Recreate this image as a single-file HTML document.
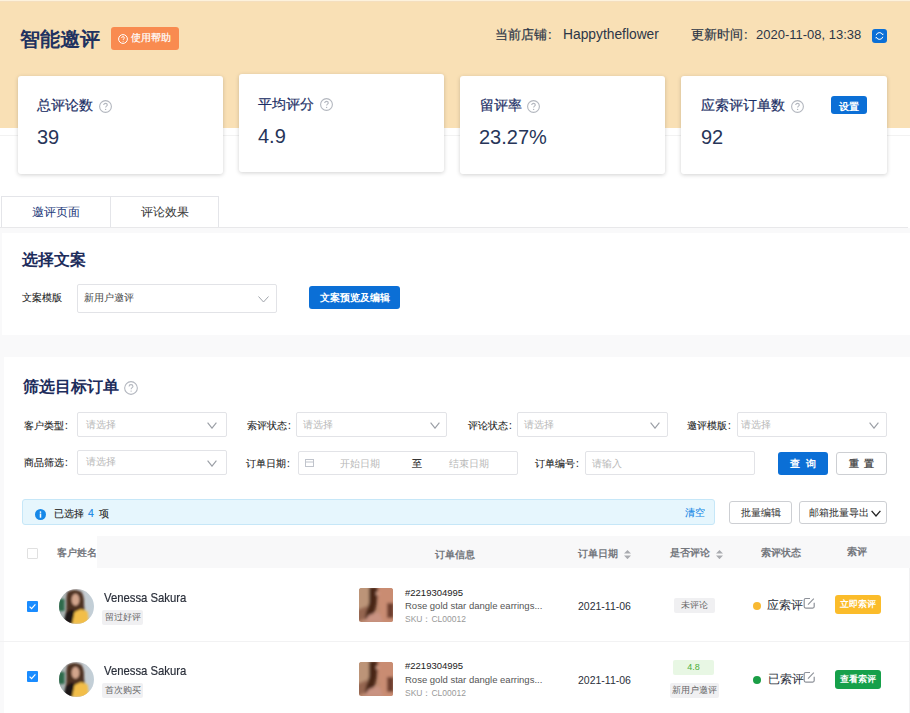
<!DOCTYPE html>
<html><head><meta charset="utf-8">
<style>
*{box-sizing:border-box;margin:0;padding:0}
html,body{width:910px;height:713px;overflow:hidden;background:#fff;font-family:"Liberation Sans",sans-serif;color:#333}
.a{position:absolute;white-space:nowrap}
#hdr{position:absolute;left:0;top:0;width:910px;height:128px;background:#f9e0b5}
.card{position:absolute;background:#fff;border-radius:3px;box-shadow:0 1px 4px rgba(0,0,0,0.18)}
.clab{position:absolute;font-size:14px;color:#1c2f66;line-height:14px;-webkit-text-stroke:0.2px #1c2f66}
.cnum{position:absolute;font-size:20px;color:#273559;line-height:20px}
.q{position:absolute;width:13px;height:13px;border:1.2px solid #b5b9c2;border-radius:50%;color:#b5b9c2;font-size:9px;line-height:11px;text-align:center;font-weight:bold}
.sel{position:absolute;border:1px solid #e2e3e7;border-radius:2px;background:#fff}
.ph{position:absolute;font-size:10px;color:#b8b8b8;line-height:11px}
.lab{position:absolute;font-size:10px;color:#222;line-height:11px;-webkit-text-stroke:0.1px #222}
.chev{position:absolute;width:10px;height:6px}
.btn{position:absolute;border-radius:3px;text-align:center;font-size:10px;font-weight:bold;color:#fff}
.hd{font-size:10px;font-weight:bold;color:#74777d;line-height:12px}
.name{font-size:13px;color:#2a2f3a;line-height:14px;-webkit-text-stroke:0.2px #2a2f3a;transform:scaleX(0.87);transform-origin:0 0}
.tag{height:15px;background:#f0f0f2;border-radius:2px;font-size:9px;color:#666;line-height:15px;text-align:center}
.ord{font-size:9.5px;color:#222;line-height:11px}
.ttl{font-size:9.5px;color:#555;line-height:11px}
.sku{font-size:8.5px;color:#999;line-height:10px}
.date{font-size:10.5px;color:#2a2f3a;line-height:12px}
.st{font-size:11.5px;color:#2a2f3a;line-height:14px}
</style></head><body>
<div id="hdr"></div>
<div class="a" style="left:0;top:0;width:910px;height:1px;background:#fdf2dd"></div>
<div class="a" style="left:0;top:1px;width:910px;height:1px;background:#f5dfbf"></div>
<div class="a" style="left:0;top:135px;width:910px;height:1px;background:#f2f2f2"></div>
<div class="a" style="left:20px;top:27px;font-size:20px;font-weight:bold;color:#213260;line-height:24px">智能邀评</div>
<div class="btn" style="left:111px;top:27px;width:68px;height:23px;background:#f98b50"></div>
<svg class="a" style="left:118px;top:34px" width="10" height="10" viewBox="0 0 10 10"><circle cx="5" cy="5" r="4.4" fill="none" stroke="#fff" stroke-width="1"/><path d="M3.6 4 C3.6 3.1 4.2 2.6 5 2.6 C5.8 2.6 6.4 3.1 6.4 3.9 C6.4 4.8 5.1 4.9 5.1 5.9" fill="none" stroke="#fff" stroke-width="0.9"/><circle cx="5.1" cy="7.3" r="0.55" fill="#fff"/></svg>
<div class="a" style="left:131px;top:32px;font-size:10px;color:#fff;line-height:12px;-webkit-text-stroke:0.2px #fff">使用帮助</div>
<div class="a" style="left:495px;top:27px;font-size:13px;color:#2c3647;line-height:15px;-webkit-text-stroke:0.2px #2c3647">当前店铺<span style="margin-left:1px">:</span></div>
<div class="a" style="left:563px;top:27px;font-size:13.8px;color:#2c3647;line-height:15px">Happytheflower</div>
<div class="a" style="left:691px;top:27px;font-size:13px;color:#2c3647;line-height:15px;-webkit-text-stroke:0.2px #2c3647">更新时间<span style="margin-left:1px">:</span></div>
<div class="a" style="left:756px;top:27px;font-size:13px;color:#2c3647;line-height:15px">2020-11-08, 13:38</div>
<div class="a" style="left:872px;top:29px;width:15px;height:14px;background:#0b6fd6;border-radius:3px"></div>
<svg class="a" style="left:874px;top:31px" width="11" height="10" viewBox="0 0 11 10"><path d="M2.2 4.2 A3.4 3.4 0 0 1 8.6 3.6" fill="none" stroke="#fff" stroke-width="1"/><path d="M8.8 5.8 A3.4 3.4 0 0 1 2.4 6.4" fill="none" stroke="#fff" stroke-width="1"/><path d="M7.6 3.2 L9.2 4.2 L9.4 2.4Z M3.4 6.8 L1.8 5.8 L1.6 7.6Z" fill="#fff"/></svg>

<div class="card" style="left:18px;top:76px;width:205px;height:98px"></div>
<div class="card" style="left:239px;top:74px;width:205px;height:98px"></div>
<div class="card" style="left:460px;top:76px;width:205px;height:98px"></div>
<div class="card" style="left:681px;top:76px;width:206px;height:98px"></div>

<div class="clab" style="left:37px;top:98px">总评论数</div>
<div class="cnum" style="left:37px;top:127px">39</div>
<div class="clab" style="left:258px;top:97px">平均评分</div>
<div class="cnum" style="left:258px;top:126px">4.9</div>
<div class="clab" style="left:480px;top:98px">留评率</div>
<div class="cnum" style="left:479px;top:127px">23.27%</div>
<div class="clab" style="left:701px;top:98px">应索评订单数</div>
<div class="cnum" style="left:701px;top:127px">92</div>
<svg class="a" style="left:99px;top:100px" width="13" height="13" viewBox="0 0 13 13"><circle cx="6.5" cy="6.5" r="5.9" fill="none" stroke="#b3b7bf" stroke-width="1.1"/><path d="M4.7 5.1 C4.7 3.9 5.5 3.4 6.5 3.4 C7.5 3.4 8.3 4 8.3 5 C8.3 6.2 6.6 6.2 6.6 7.6" fill="none" stroke="#b3b7bf" stroke-width="1.1"/><circle cx="6.6" cy="9.4" r="0.7" fill="#b3b7bf"/></svg>
<svg class="a" style="left:320px;top:98px" width="13" height="13" viewBox="0 0 13 13"><circle cx="6.5" cy="6.5" r="5.9" fill="none" stroke="#b3b7bf" stroke-width="1.1"/><path d="M4.7 5.1 C4.7 3.9 5.5 3.4 6.5 3.4 C7.5 3.4 8.3 4 8.3 5 C8.3 6.2 6.6 6.2 6.6 7.6" fill="none" stroke="#b3b7bf" stroke-width="1.1"/><circle cx="6.6" cy="9.4" r="0.7" fill="#b3b7bf"/></svg>
<svg class="a" style="left:527px;top:100px" width="13" height="13" viewBox="0 0 13 13"><circle cx="6.5" cy="6.5" r="5.9" fill="none" stroke="#b3b7bf" stroke-width="1.1"/><path d="M4.7 5.1 C4.7 3.9 5.5 3.4 6.5 3.4 C7.5 3.4 8.3 4 8.3 5 C8.3 6.2 6.6 6.2 6.6 7.6" fill="none" stroke="#b3b7bf" stroke-width="1.1"/><circle cx="6.6" cy="9.4" r="0.7" fill="#b3b7bf"/></svg>
<svg class="a" style="left:791px;top:100px" width="13" height="13" viewBox="0 0 13 13"><circle cx="6.5" cy="6.5" r="5.9" fill="none" stroke="#b3b7bf" stroke-width="1.1"/><path d="M4.7 5.1 C4.7 3.9 5.5 3.4 6.5 3.4 C7.5 3.4 8.3 4 8.3 5 C8.3 6.2 6.6 6.2 6.6 7.6" fill="none" stroke="#b3b7bf" stroke-width="1.1"/><circle cx="6.6" cy="9.4" r="0.7" fill="#b3b7bf"/></svg>
<div class="btn" style="left:831px;top:96px;width:36px;height:18px;background:#0b6fd6"></div>
<div class="a" style="left:839px;top:100.5px;font-size:10px;font-weight:bold;color:#fff;line-height:12px">设置</div>

<!-- tabs -->
<div class="a" style="left:1px;top:196px;width:110px;height:32px;border:1px solid #e4e5e9;border-bottom:none;font-size:11.5px;color:#22397a;text-align:center;line-height:30px">邀评页面</div>
<div class="a" style="left:110px;top:196px;width:109px;height:32px;border:1px solid #e4e5e9;border-bottom:none;font-size:11.5px;color:#333;text-align:center;line-height:30px">评论效果</div>
<div class="a" style="left:0;top:227px;width:908px;height:1px;background:#e8e8ea"></div>
<div class="a" style="left:0;top:228px;width:910px;height:485px;background:#f9f9fa"></div>

<!-- section 1 -->
<div class="a" style="left:2px;top:233px;width:908px;height:102px;background:#fff"></div>
<div class="a" style="left:22px;top:251px;font-size:15.6px;font-weight:bold;color:#1d2d5c;line-height:18px">选择文案</div>
<div class="lab" style="left:22px;top:292px">文案模版</div>
<div class="sel" style="left:77px;top:284px;width:200px;height:29px"></div>
<div class="a" style="left:84px;top:292px;font-size:10px;color:#444;line-height:11px">新用户邀评</div>
<svg class="chev" style="left:258px;top:296px;width:11px;height:7px" viewBox="0 0 11 7"><path d="M0.5 0.5 L5.5 6 L10.5 0.5" fill="none" stroke="#a0a4ab" stroke-width="1"/></svg>
<div class="btn" style="left:309px;top:286px;width:91px;height:23px;background:#0b6fd6;line-height:23px">文案预览及编辑</div>

<!-- section 2 -->
<div class="a" style="left:4px;top:357px;width:906px;height:356px;background:#fff"></div>
<div class="a" style="left:23px;top:377.5px;font-size:15.6px;font-weight:bold;color:#1d2d5c;line-height:18px">筛选目标订单</div>
<svg class="a" style="left:123.5px;top:381px" width="14" height="14" viewBox="0 0 13 13"><circle cx="6.5" cy="6.5" r="5.9" fill="none" stroke="#b3b7bf" stroke-width="1"/><path d="M4.7 5.1 C4.7 3.9 5.5 3.4 6.5 3.4 C7.5 3.4 8.3 4 8.3 5 C8.3 6.2 6.6 6.2 6.6 7.6" fill="none" stroke="#b3b7bf" stroke-width="1"/><circle cx="6.6" cy="9.4" r="0.65" fill="#b3b7bf"/></svg>


<!-- filter rows -->
<div class="lab" style="left:24px;top:420px">客户类型<span style="margin-left:1px">:</span></div>
<div class="sel" style="left:77px;top:412px;width:150px;height:25px"></div>
<div class="ph" style="left:86px;top:419px">请选择</div>
<svg class="a" style="left:207px;top:421.5px" width="10" height="7" viewBox="0 0 10 7"><path d="M0.6 0.6 L5 6.2 L9.4 0.6" fill="none" stroke="#9a9ea5" stroke-width="1.1"/></svg>

<div class="lab" style="left:247px;top:420px">索评状态<span style="margin-left:1px">:</span></div>
<div class="sel" style="left:296px;top:412px;width:151px;height:25px"></div>
<div class="ph" style="left:303px;top:419px">请选择</div>
<svg class="a" style="left:430px;top:421.5px" width="10" height="7" viewBox="0 0 10 7"><path d="M0.6 0.6 L5 6.2 L9.4 0.6" fill="none" stroke="#9a9ea5" stroke-width="1.1"/></svg>

<div class="lab" style="left:468px;top:420px">评论状态<span style="margin-left:1px">:</span></div>
<div class="sel" style="left:517px;top:412px;width:151px;height:25px"></div>
<div class="ph" style="left:524px;top:419px">请选择</div>
<svg class="a" style="left:650px;top:421.5px" width="10" height="7" viewBox="0 0 10 7"><path d="M0.6 0.6 L5 6.2 L9.4 0.6" fill="none" stroke="#9a9ea5" stroke-width="1.1"/></svg>

<div class="lab" style="left:687px;top:420px">邀评模版<span style="margin-left:1px">:</span></div>
<div class="sel" style="left:737px;top:412px;width:150px;height:25px"></div>
<div class="ph" style="left:741px;top:419px">请选择</div>
<svg class="a" style="left:869px;top:421.5px" width="10" height="7" viewBox="0 0 10 7"><path d="M0.6 0.6 L5 6.2 L9.4 0.6" fill="none" stroke="#9a9ea5" stroke-width="1.1"/></svg>

<div class="lab" style="left:24px;top:457px">商品筛选<span style="margin-left:1px">:</span></div>
<div class="sel" style="left:77px;top:450px;width:150px;height:25px"></div>
<div class="ph" style="left:86px;top:456px">请选择</div>
<svg class="a" style="left:207px;top:459.5px" width="10" height="7" viewBox="0 0 10 7"><path d="M0.6 0.6 L5 6.2 L9.4 0.6" fill="none" stroke="#9a9ea5" stroke-width="1.1"/></svg>

<div class="lab" style="left:246px;top:458px">订单日期<span style="margin-left:1px">:</span></div>
<div class="sel" style="left:298px;top:451px;width:220px;height:24px"></div>
<svg class="a" style="left:305px;top:458px" width="9" height="9" viewBox="0 0 9 9"><rect x="0.5" y="1.5" width="8" height="7" fill="none" stroke="#c0c4cc" stroke-width="1"/><line x1="0.5" y1="4" x2="8.5" y2="4" stroke="#c0c4cc"/></svg>
<div class="ph" style="left:340px;top:458px">开始日期</div>
<div class="lab" style="left:412px;top:458px">至</div>
<div class="ph" style="left:449px;top:458px">结束日期</div>

<div class="lab" style="left:535px;top:458px">订单编号<span style="margin-left:1px">:</span></div>
<div class="sel" style="left:585px;top:451px;width:170px;height:24px"></div>
<div class="ph" style="left:592px;top:458px">请输入</div>

<div class="btn" style="left:778px;top:452px;width:50px;height:23px;background:#0b6fd6;line-height:23px;font-size:10px;letter-spacing:5.5px;text-indent:5.5px">查询</div>
<div class="btn" style="left:836px;top:452px;width:51px;height:23px;background:#fff;border:1px solid #cdcfd3;color:#555;line-height:21px;font-size:10px;letter-spacing:5.5px;text-indent:5.5px">重置</div>

<!-- alert -->
<div class="a" style="left:22px;top:499px;width:693px;height:26px;background:#e6f6fd;border:1px solid #c6e7f8;border-radius:3px"></div>
<svg class="a" style="left:35px;top:508.5px" width="11" height="11" viewBox="0 0 11 11"><circle cx="5.5" cy="5.5" r="5.5" fill="#1688e8"/><circle cx="5.5" cy="3.1" r="0.85" fill="#fff"/><rect x="4.75" y="4.5" width="1.5" height="4.2" fill="#fff"/></svg>
<div class="a" style="left:54px;top:508px;font-size:10px;color:#222;line-height:11px;-webkit-text-stroke:0.1px #222">已选择</div>
<div class="a" style="left:88px;top:508px;font-size:10.5px;color:#1688e6;line-height:11px;-webkit-text-stroke:0.15px #1688e6">4</div>
<div class="a" style="left:98.5px;top:508px;font-size:10px;color:#222;line-height:11px;-webkit-text-stroke:0.1px #222">项</div>
<div class="a" style="left:685px;top:507px;font-size:10px;color:#1688e6;line-height:12px;-webkit-text-stroke:0.1px #1688e6">清空</div>
<div class="btn" style="left:729px;top:501px;width:63px;height:23px;background:#fff;border:1px solid #cdcfd3;color:#3a3a3a;line-height:21px;font-weight:normal;-webkit-text-stroke:0.05px #333">批量编辑</div>
<div class="btn" style="left:799px;top:501px;width:88px;height:23px;background:#fff;border:1px solid #cdcfd3;color:#333;line-height:21px;font-weight:normal;text-align:left;padding-left:9px;-webkit-text-stroke:0.05px #333">邮箱批量导出</div>
<svg class="a" style="left:870.5px;top:509.5px" width="10" height="7" viewBox="0 0 10 7"><path d="M0.6 0.8 L5 6 L9.4 0.8" fill="none" stroke="#222" stroke-width="1.3"/></svg>

<!-- table header -->
<div class="a" style="left:97px;top:536px;width:813px;height:32px;background:#f8f8f9"></div>
<div class="a" style="left:27px;top:548px;width:11px;height:11px;border:1px solid #e0e0e0;background:#fff;border-radius:1px"></div>

<!-- table header text -->
<div class="a hd" style="left:57px;top:547px">客户姓名</div>
<div class="a hd" style="left:435px;top:549px">订单信息</div>
<div class="a hd" style="left:578px;top:548px">订单日期</div>
<svg class="a" style="left:624px;top:549.5px" width="7" height="9.5" viewBox="0 0 7 9.5"><path d="M3.5 0 L7 3.6 L0 3.6 Z M0 5.4 L7 5.4 L3.5 9.2 Z" fill="#a9abb0"/></svg>
<div class="a hd" style="left:670px;top:547px">是否评论</div>
<svg class="a" style="left:716px;top:549.5px" width="7" height="9.5" viewBox="0 0 7 9.5"><path d="M3.5 0 L7 3.6 L0 3.6 Z M0 5.4 L7 5.4 L3.5 9.2 Z" fill="#a9abb0"/></svg>
<div class="a hd" style="left:761px;top:547px">索评状态</div>
<div class="a hd" style="left:847px;top:546px">索评</div>
<div class="a" style="left:0;top:641px;width:910px;height:1px;background:#f2f2f3"></div>
<div class="a" style="left:27px;top:601px;width:11px;height:11px;background:#1a8cff;border-radius:1px"><svg width="11" height="11" viewBox="0 0 11 11" style="position:absolute;left:0;top:0"><path d="M2.6 5.6 L4.6 7.6 L8.4 3.4" fill="none" stroke="#fff" stroke-width="1.2"/></svg></div>
<svg class="a" style="left:59px;top:589px" width="35" height="35" viewBox="0 0 35 35"><defs><clipPath id="cx589"><circle cx="17.5" cy="17.5" r="17.5"/></clipPath><filter id="fx589" x="-20%" y="-20%" width="140%" height="140%"><feGaussianBlur stdDeviation="0.8"/></filter><linearGradient id="lgx589" x1="0" y1="0" x2="1" y2="0"><stop offset="0" stop-color="#9aa8a8"/><stop offset="0.35" stop-color="#c8c8c8"/><stop offset="1" stop-color="#c2cfd8"/></linearGradient></defs>
<g clip-path="url(#cx589)"><rect width="35" height="35" fill="url(#lgx589)"/><g filter="url(#fx589)">
<rect x="-1" y="10" width="6.5" height="12" fill="#2f6a4c"/>
<path d="M8.5 3 Q15.5 -1 22.5 3 Q25.5 8 25 16 Q25.5 23 27 28 L17 29 L6 28 Q8 20 7.5 14 Q7 7 8.5 3Z" fill="#4e3022"/>
<ellipse cx="16.5" cy="10.8" rx="3.9" ry="6" fill="#d2a58c"/>
<path d="M4 35 L7 24 L12 20.5 L16 22 L15 35Z" fill="#1a1614"/>
<path d="M13 35 L15.5 23 L22 20 L28.5 22.5 L30 35Z" fill="#f2be48"/>
</g></g></svg>
<div class="a name" style="left:104px;top:591px">Venessa Sakura</div>
<div class="a tag" style="left:102px;top:610px;width:41px">留过好评</div>
<svg class="a" style="left:359px;top:588px" width="34" height="34" viewBox="0 0 34 34"><defs><clipPath id="py588"><rect width="34" height="34" rx="2.5"/></clipPath><filter id="gy588" x="-20%" y="-20%" width="140%" height="140%"><feGaussianBlur stdDeviation="1.4"/></filter></defs>
<g clip-path="url(#py588)"><rect width="34" height="34" fill="#bd8a70"/><g filter="url(#gy588)">
<path d="M-2 -2 L12 -2 L13 10 L10 22 L6 30 L-2 34Z" fill="#bc9478"/>
<path d="M-2 22 L8 18 L7 30 L-2 34Z" fill="#946550"/>
<path d="M17 -2 L36 -2 L36 36 L20 36 L21 22 L19 12Z" fill="#c98c72"/>
<path d="M10 -1 L19 -1 L19 6 L18 15 L16 23 L12 29 L6 32 L7 24 L10 15Z" fill="#4a2619"/>
<rect x="28" y="15" width="7" height="15" fill="#6d3d2e"/>
<path d="M5 34 L10 27 L20 24 L24 34Z" fill="#c99382"/>
<ellipse cx="18.5" cy="5.5" rx="1.4" ry="2" fill="#d9a890"/>
</g></g></svg>
<div class="a ord" style="left:405px;top:587px">#2219304995</div>
<div class="a ttl" style="left:405px;top:600px">Rose gold star dangle earrings...</div>
<div class="a sku" style="left:405px;top:614px">SKU：CL00012</div>
<div class="a date" style="left:578px;top:600px">2021-11-06</div>
<div class="a" style="left:753px;top:602px;width:8px;height:8px;border-radius:50%;background:#f8b932"></div>
<div class="a st" style="left:767px;top:598px">应索评</div>
<svg class="a" style="left:803px;top:597px" width="12" height="12" viewBox="0 0 12 12"><path d="M7 1.5 L2.7 1.5 Q1.2 1.5 1.2 3 L1.2 9.6 Q1.2 11.1 2.7 11.1 L9.7 11.1 Q11.2 11.1 11.2 9.6 L11.2 5.8" fill="none" stroke="#8d9199" stroke-width="1.2"/><path d="M5 7.6 L10.8 1.6" stroke="#8d9199" stroke-width="1.1"/></svg>
<div class="btn" style="left:835px;top:595px;width:46px;height:19px;background:#fbbc2a;line-height:19px;font-size:8.6px">立即索评</div>
<div class="a" style="left:27px;top:671px;width:11px;height:11px;background:#1a8cff;border-radius:1px"><svg width="11" height="11" viewBox="0 0 11 11" style="position:absolute;left:0;top:0"><path d="M2.6 5.6 L4.6 7.6 L8.4 3.4" fill="none" stroke="#fff" stroke-width="1.2"/></svg></div>
<svg class="a" style="left:59px;top:662px" width="35" height="35" viewBox="0 0 35 35"><defs><clipPath id="cx662"><circle cx="17.5" cy="17.5" r="17.5"/></clipPath><filter id="fx662" x="-20%" y="-20%" width="140%" height="140%"><feGaussianBlur stdDeviation="0.8"/></filter><linearGradient id="lgx662" x1="0" y1="0" x2="1" y2="0"><stop offset="0" stop-color="#9aa8a8"/><stop offset="0.35" stop-color="#c8c8c8"/><stop offset="1" stop-color="#c2cfd8"/></linearGradient></defs>
<g clip-path="url(#cx662)"><rect width="35" height="35" fill="url(#lgx662)"/><g filter="url(#fx662)">
<rect x="-1" y="10" width="6.5" height="12" fill="#2f6a4c"/>
<path d="M8.5 3 Q15.5 -1 22.5 3 Q25.5 8 25 16 Q25.5 23 27 28 L17 29 L6 28 Q8 20 7.5 14 Q7 7 8.5 3Z" fill="#4e3022"/>
<ellipse cx="16.5" cy="10.8" rx="3.9" ry="6" fill="#d2a58c"/>
<path d="M4 35 L7 24 L12 20.5 L16 22 L15 35Z" fill="#1a1614"/>
<path d="M13 35 L15.5 23 L22 20 L28.5 22.5 L30 35Z" fill="#f2be48"/>
</g></g></svg>
<div class="a name" style="left:104px;top:664px">Venessa Sakura</div>
<div class="a tag" style="left:102px;top:683px;width:41px">首次购买</div>
<svg class="a" style="left:359px;top:662px" width="34" height="34" viewBox="0 0 34 34"><defs><clipPath id="py661"><rect width="34" height="34" rx="2.5"/></clipPath><filter id="gy661" x="-20%" y="-20%" width="140%" height="140%"><feGaussianBlur stdDeviation="1.4"/></filter></defs>
<g clip-path="url(#py661)"><rect width="34" height="34" fill="#bd8a70"/><g filter="url(#gy661)">
<path d="M-2 -2 L12 -2 L13 10 L10 22 L6 30 L-2 34Z" fill="#bc9478"/>
<path d="M-2 22 L8 18 L7 30 L-2 34Z" fill="#946550"/>
<path d="M17 -2 L36 -2 L36 36 L20 36 L21 22 L19 12Z" fill="#c98c72"/>
<path d="M10 -1 L19 -1 L19 6 L18 15 L16 23 L12 29 L6 32 L7 24 L10 15Z" fill="#4a2619"/>
<rect x="28" y="15" width="7" height="15" fill="#6d3d2e"/>
<path d="M5 34 L10 27 L20 24 L24 34Z" fill="#c99382"/>
<ellipse cx="18.5" cy="5.5" rx="1.4" ry="2" fill="#d9a890"/>
</g></g></svg>
<div class="a ord" style="left:405px;top:660px">#2219304995</div>
<div class="a ttl" style="left:405px;top:674px">Rose gold star dangle earrings...</div>
<div class="a sku" style="left:405px;top:688px">SKU：CL00012</div>
<div class="a date" style="left:578px;top:674px">2021-11-06</div>
<div class="a" style="left:753px;top:676px;width:8px;height:8px;border-radius:50%;background:#1a9e46"></div>
<div class="a st" style="left:768px;top:672px">已索评</div>
<svg class="a" style="left:803px;top:671px" width="12" height="12" viewBox="0 0 12 12"><path d="M7 1.5 L2.7 1.5 Q1.2 1.5 1.2 3 L1.2 9.6 Q1.2 11.1 2.7 11.1 L9.7 11.1 Q11.2 11.1 11.2 9.6 L11.2 5.8" fill="none" stroke="#8d9199" stroke-width="1.2"/><path d="M5 7.6 L10.8 1.6" stroke="#8d9199" stroke-width="1.1"/></svg>
<div class="btn" style="left:835px;top:670px;width:46px;height:19px;background:#16a04a;line-height:19px;font-size:8.6px">查看索评</div>
<div class="a tag" style="left:674px;top:598px;width:41px">未评论</div>
<div class="a tag" style="left:673px;top:660px;width:41px;background:#e8f7e4;color:#4cae3a">4.8</div>
<div class="a tag" style="left:670px;top:683px;width:49px">新用户邀评</div>
<div class="a" style="left:909px;top:568px;width:1px;height:145px;background:#f1f1f2"></div>
</body></html>
